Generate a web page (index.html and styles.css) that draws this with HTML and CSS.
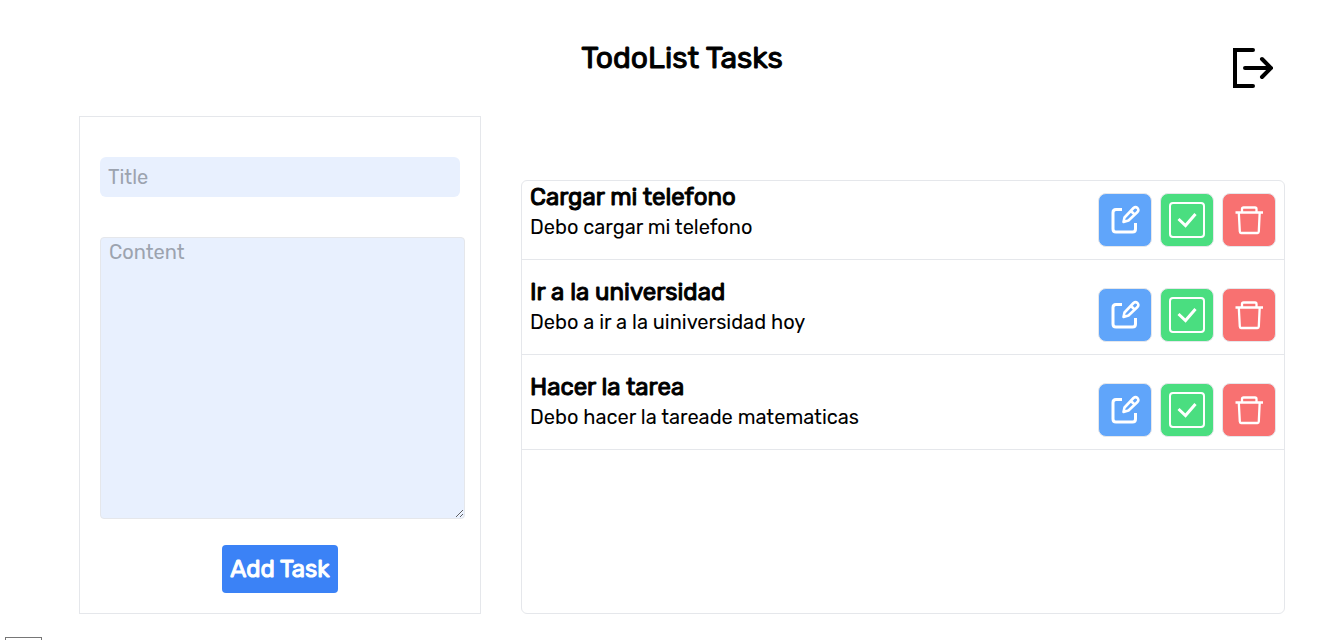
FILE: index.html
```html
<!DOCTYPE html>
<html lang="es">
<head>
<meta charset="utf-8">
<meta name="viewport" content="width=device-width, initial-scale=1">
<title>TodoList Tasks</title>
<link rel="stylesheet" href="styles.css">
</head>
<body>
<svg class="sprite" aria-hidden="true">
  <symbol id="edit" viewBox="0 0 30 30" fill="none" stroke="currentColor" stroke-width="3" stroke-linecap="round" stroke-linejoin="round">
    <path stroke-linecap="butt" d="M12 4.500H6Q3 4.500 3 7.500V24Q3 27 6 27H22.500Q25.500 27 25.500 24V18"/>
    <path stroke-width="2.600" d="M13.500 17L14.500 12.500L23.500 3Q25.500 1.300 27.500 3Q29.200 5 27.500 7L18.500 15.500ZM21.500 6.500L24 9"/>
  </symbol>
  <symbol id="check" viewBox="0 0 36 36" fill="none" stroke="currentColor" stroke-linecap="round" stroke-linejoin="round">
    <rect x="1" y="1" width="34" height="34" rx="3" stroke-width="2"/>
    <path stroke-width="3" stroke-linecap="butt" stroke-linejoin="miter" d="M9.500 17L16.500 23.500L26.500 12"/>
  </symbol>
  <symbol id="trash" viewBox="0 0 30 30" fill="none" stroke="currentColor" stroke-width="2.300" stroke-linejoin="round">
    <path d="M1.500 7.500H29M8 7.500V4Q8 2.500 9.500 2.500H21Q22.500 2.500 22.500 4V7.500M4.800 7.500L5.800 26.500Q5.900 28 7 28H23.500Q24.700 28 24.800 26.500L25.700 7.500"/>
  </symbol>
</svg>
<div class="page">
  <header class="header">
    <h1 class="title">TodoList Tasks</h1>
    <button class="logout" type="button" aria-label="Salir">
      <svg width="40" height="40" viewBox="0 0 40 40" fill="none" stroke="currentColor" stroke-width="4" stroke-linecap="round"><path d="M20 2H2V38H20M12 20H38M29 11L38 20L29 29"/></svg>
    </button>
  </header>
  <main class="main">
    <form class="form">
      <input class="field field-title" type="text" placeholder="Title" aria-label="Title">
      <textarea class="field field-content" placeholder="Content" aria-label="Content"></textarea>
      <button class="add" type="button">Add Task</button>
    </form>
    <ul class="list">
      <li class="task">
        <div class="task-text"><h2 class="task-name">Cargar mi telefono</h2><p class="task-desc">Debo cargar mi telefono</p></div>
        <div class="actions">
          <button class="action edit" type="button" aria-label="Editar"><svg width="30" height="30"><use href="#edit"/></svg></button>
          <button class="action done" type="button" aria-label="Completar"><svg width="36" height="36"><use href="#check"/></svg></button>
          <button class="action delete" type="button" aria-label="Eliminar"><svg width="30" height="30"><use href="#trash"/></svg></button>
        </div>
      </li>
      <li class="task">
        <div class="task-text"><h2 class="task-name">Ir a la universidad</h2><p class="task-desc">Debo a ir a la uiniversidad hoy</p></div>
        <div class="actions">
          <button class="action edit" type="button" aria-label="Editar"><svg width="30" height="30"><use href="#edit"/></svg></button>
          <button class="action done" type="button" aria-label="Completar"><svg width="36" height="36"><use href="#check"/></svg></button>
          <button class="action delete" type="button" aria-label="Eliminar"><svg width="30" height="30"><use href="#trash"/></svg></button>
        </div>
      </li>
      <li class="task">
        <div class="task-text"><h2 class="task-name">Hacer la tarea</h2><p class="task-desc">Debo hacer la tareade matematicas</p></div>
        <div class="actions">
          <button class="action edit" type="button" aria-label="Editar"><svg width="30" height="30"><use href="#edit"/></svg></button>
          <button class="action done" type="button" aria-label="Completar"><svg width="36" height="36"><use href="#check"/></svg></button>
          <button class="action delete" type="button" aria-label="Eliminar"><svg width="30" height="30"><use href="#trash"/></svg></button>
        </div>
      </li>
    </ul>
  </main>
</div>
<div class="corner-box"></div>
</body>
</html>
```

FILE: styles.css
```css
* {
  box-sizing: border-box;
  margin: 0;
  padding: 0;
}

body {
  display: flex;
  flex-direction: column;
  height: 100vh;
  overflow: hidden;
  background: #fff;
  color: #000;
  font-family: Rubik, Roboto, sans-serif;
  font-size: 20px;
  line-height: 28px;
}

button, input, textarea {
  font: inherit;
}

button {
  cursor: pointer;
}

.sprite {
  display: none;
}

.page {
  flex: none;
  padding: 40px 37px 0 79px;
}

.header {
  display: grid;
  grid-template-columns: 1fr auto 1fr;
  align-items: start;
  height: 76px;
}

.title, .task-name, .add {
  font-weight: 400;
  -webkit-text-stroke: 1px currentColor;
}

.title {
  grid-column: 2;
  font-size: 30px;
  line-height: 36px;
}

.logout {
  justify-self: end;
  margin: 8px 12px 0 0;
  border: 0;
  background: none;
  color: #000;
}

.logout svg, .action svg {
  display: block;
}

.main {
  display: grid;
  grid-template-columns: 402px 1fr;
  gap: 40px;
}

.form {
  display: flex;
  flex-direction: column;
  align-items: flex-start;
  padding: 40px 20px 20px;
  border: 1px solid #e5e7eb;
}

.field {
  border: 0;
  outline: 0;
  background: #e8f0fe;
  color: #000;
}

.field::placeholder {
  color: #9ca3af;
  opacity: 1;
}

.field-title {
  width: 100%;
  height: 40px;
  padding: 0 8px;
  border-radius: 6px;
}

.field-content {
  width: 365px;
  height: 282px;
  margin: 40px 0 26px;
  padding: 0 8px;
  border: 1px solid #e5e7eb;
  border-radius: 4px;
  resize: both;
}

.add {
  align-self: center;
  padding: 8px;
  border: 0;
  border-radius: 4px;
  background: #3b82f6;
  color: #fff;
  font-size: 24px;
  line-height: 32px;
}

.list {
  margin-top: 64px;
  border: 1px solid #e5e7eb;
  border-radius: 6px;
  list-style: none;
}

.task {
  display: flex;
  justify-content: space-between;
  padding: 0 8px;
  border-bottom: 1px solid #e5e7eb;
}

.task + .task {
  margin-top: 16px;
}

.task-name {
  font-size: 24px;
  line-height: 32px;
}

.actions {
  display: flex;
  gap: 8px;
  padding: 12px 0;
}

.action {
  display: grid;
  place-items: center;
  width: 54px;
  height: 54px;
  border: 1px solid #e5e7eb;
  border-radius: 8px;
  color: #fff;
}

.edit {
  background: #60a5fa;
}

.done {
  background: #4ade80;
}

.delete {
  background: #f87171;
}

.corner-box {
  flex: 1;
  width: 37px;
  margin: 23px 0 0 5px;
  border: 1px solid #767676;
  border-bottom: 0;
}
```
